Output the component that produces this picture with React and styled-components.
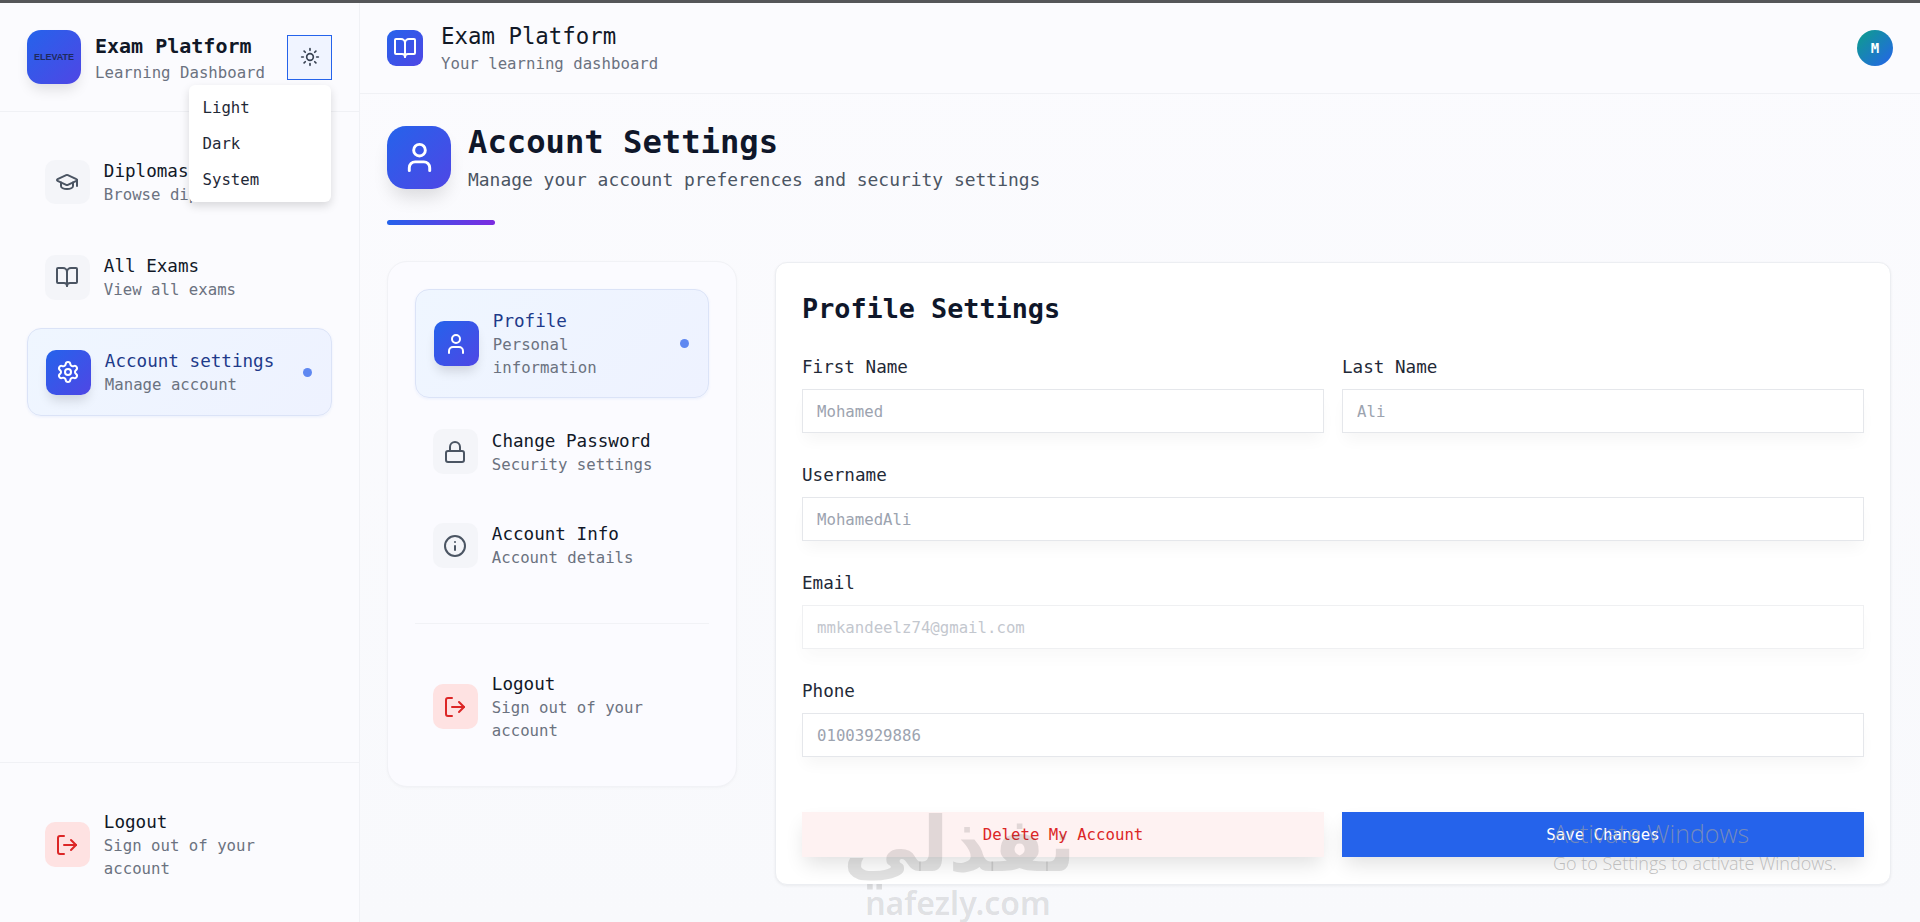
import React from 'react';
import styled, { createGlobalStyle } from 'styled-components';
import { BookOpen, GraduationCap, Info, Lock, LogOut, Settings, Sun, User } from 'lucide-react';

const GlobalStyle = createGlobalStyle`
  * { box-sizing: border-box; }
  html, body { margin: 0; padding: 0; height: 100%; }
  body {
    background: #fbfbfe;
    color: #111827;
    font-family: "DejaVu Sans Mono", "Liberation Mono", monospace;
    overflow: hidden;
  }
`;

const Page = styled.div`
  position: relative;
  width: 1920px;
  height: 922px;
  overflow: hidden;
  border-top: 3px solid #555659;
  display: flex;
`;

// Sidebar
const Sidebar = styled.aside`
  width: 360px;
  flex-shrink: 0;
  display: flex;
  flex-direction: column;
  background: #fbfbfe;
  border-right: 1px solid #f0f1f5;
`;

const SidebarHeader = styled.div`
  position: relative;
  height: 109px;
  flex-shrink: 0;
  padding: 0 27px;
  display: flex;
  align-items: center;
  gap: 14px;
  border-bottom: 1px solid #f0f1f5;
`;

const Logo = styled.div`
  width: 54px;
  height: 54px;
  flex-shrink: 0;
  border-radius: 14px;
  background: linear-gradient(135deg, #2563eb, #4f46e5);
  box-shadow: 0 8px 14px -3px rgba(0, 0, 0, 0.12);
  display: flex;
  align-items: center;
  justify-content: center;
  color: #1e2a5e;
  font-family: "Liberation Sans", sans-serif;
  font-size: 9px;
  font-weight: 700;
`;

const BrandText = styled.div`
  flex: 1;
  min-width: 0;
  padding-top: 4px;
`;

const BrandTitle = styled.div`
  font-size: 20px;
  line-height: 28px;
  font-weight: 600;
  color: #111827;
  white-space: nowrap;
`;

const BrandSub = styled.div`
  font-size: 15.7px;
  line-height: 26px;
  color: #6b7280;
  white-space: nowrap;
`;

const ThemeButton = styled.button`
  width: 45px;
  height: 45px;
  flex-shrink: 0;
  padding: 0;
  margin-left: -8px;
  background: #f0f4ff;
  border: 1px solid #2563eb;
  color: #374151;
  display: flex;
  align-items: center;
  justify-content: center;
`;

const ThemeMenu = styled.div`
  position: absolute;
  top: 82px;
  left: 189px;
  width: 142px;
  padding: 4px 0 5px;
  background: #fff;
  border-radius: 6px;
  box-shadow: 0 4px 10px rgba(0, 0, 0, 0.14);
  z-index: 5;
`;

const ThemeOption = styled.div`
  height: 36px;
  padding: 0 14px 0 13.5px;
  display: flex;
  align-items: center;
  font-size: 15.7px;
  color: #1f2937;
`;

const SideNav = styled.nav`
  padding: 26px 27px;
  display: flex;
  flex-direction: column;
  gap: 7.2px;
`;

const SidebarFooter = styled.div`
  margin-top: auto;
  padding: 27px 27px 23px;
  border-top: 1px solid #f0f1f5;
`;

// Shared nav row
const NavRow = styled.div`
  display: flex;
  align-items: center;
  gap: 14px;
  padding: 18px 18px 18px ${(p) => (p.$active ? '18px' : '17px')};
  min-height: 88px;
  margin-bottom: ${(p) => (p.$active ? '4px' : '0')};
  border-radius: 14px;
  border: 1px solid ${(p) => (p.$active ? '#dbe3f7' : 'transparent')};
  background: ${(p) => (p.$active ? 'linear-gradient(135deg, #eff6ff, #eef2ff)' : 'transparent')};
  box-shadow: ${(p) => (p.$active ? '0 1px 3px rgba(37, 99, 235, 0.08)' : 'none')};
`;

const iconBg = (p) => {
  if (p.$tone === 'active') return 'linear-gradient(135deg, #2563eb, #4f46e5)';
  if (p.$tone === 'danger') return '#fee2e2';
  return '#f4f5f9';
};

const iconColor = (p) => {
  if (p.$tone === 'active') return '#fff';
  if (p.$tone === 'danger') return '#dc2626';
  return '#4b5563';
};

const NavIcon = styled.div`
  width: 44.8px;
  height: 44.8px;
  flex-shrink: 0;
  border-radius: 10px;
  background: ${iconBg};
  color: ${iconColor};
  box-shadow: ${(p) => (p.$tone === 'active' ? '0 8px 12px -3px rgba(0, 0, 0, 0.14)' : 'none')};
  display: flex;
  align-items: center;
  justify-content: center;
`;

const NavText = styled.div`
  flex: 1;
  min-width: 0;
`;

const NavTitle = styled.div`
  font-size: 17.6px;
  line-height: 26px;
  font-weight: 500;
  color: ${(p) => (p.$active ? '#1e3a8a' : '#111827')};
`;

const NavSub = styled.div`
  font-size: 15.7px;
  line-height: 22.4px;
  color: #6b7280;
`;

const ActiveDot = styled.span`
  width: 9px;
  height: 9px;
  flex-shrink: 0;
  border-radius: 50%;
  background: #5f88f1;
  margin-right: 1px;
`;

// Main column
const Main = styled.main`
  flex: 1;
  min-width: 0;
  display: flex;
  flex-direction: column;
  background: linear-gradient(180deg, #fbfbfe, #f8f9fc);
`;

const TopBar = styled.header`
  height: 91px;
  flex-shrink: 0;
  padding: 0 27px;
  display: flex;
  align-items: center;
  gap: 18px;
  background: #fbfbfe;
  border-bottom: 1px solid #f0f1f5;
`;

const TopIcon = styled.div`
  width: 36px;
  height: 36px;
  border-radius: 9px;
  background: linear-gradient(135deg, #2563eb, #4f46e5);
  color: #fff;
  display: flex;
  align-items: center;
  justify-content: center;
`;

const TopText = styled.div`
  flex: 1;
  padding-top: 2px;
`;

const TopTitle = styled.div`
  font-size: 22.4px;
  line-height: 30px;
  font-weight: 500;
  color: #111827;
`;

const TopSub = styled.div`
  font-size: 15.7px;
  line-height: 26px;
  color: #6b7280;
`;

const Avatar = styled.div`
  width: 36px;
  height: 36px;
  border-radius: 50%;
  background: linear-gradient(135deg, #0d9f8a, #2563eb);
  color: #fff;
  font-size: 14px;
  font-weight: 700;
  display: flex;
  align-items: center;
  justify-content: center;
`;

const Content = styled.div`
  padding: 26px 29px 0 27px;
`;

const PageHead = styled.div`
  display: flex;
  align-items: center;
  gap: 17px;
`;

const PageIcon = styled.div`
  width: 64px;
  height: 63px;
  margin-top: 1px;
  flex-shrink: 0;
  border-radius: 19px;
  background: linear-gradient(135deg, #2563eb, #4f46e5);
  box-shadow: 0 12px 18px -4px rgba(0, 0, 0, 0.13);
  color: #fff;
  display: flex;
  align-items: center;
  justify-content: center;
`;

const PageTitle = styled.h1`
  margin: 0 0 3.8px;
  padding-top: 1px;
  font-size: 32.2px;
  line-height: 42px;
  font-weight: 700;
  color: #0f172a;
`;

const PageSub = styled.p`
  margin: 0;
  font-size: 17.95px;
  line-height: 26.4px;
  color: #4b5563;
`;

const AccentBar = styled.div`
  width: 108px;
  height: 5px;
  margin-top: 27px;
  border-radius: 3px;
  background: linear-gradient(90deg, #2563eb, #7c2be0);
`;

const SettingsGrid = styled.div`
  margin-top: 36px;
  display: grid;
  grid-template-columns: 350px 1116px;
  column-gap: 38px;
  align-items: start;
`;

const SettingsNav = styled.div`
  padding: 27px 27px 24.5px;
  border: 1px solid #f1f2f6;
  border-radius: 20px;
  background: #fbfbff;
  box-shadow: 0 1px 3px rgba(0, 0, 0, 0.03);
  display: flex;
  flex-direction: column;
  gap: 5.8px;
`;

const NavDivider = styled.div`
  height: 1px;
  margin: 28px 0 22px;
  background: #f1f2f6;
`;

const FormCard = styled.section`
  margin-top: 1px;
  padding: 26px 26px 27px;
  background: #fff;
  border: 1px solid #eceef2;
  border-radius: 12px;
  box-shadow: 0 1px 3px rgba(0, 0, 0, 0.06);
`;

const FormTitle = styled.h2`
  margin: 0 0 25px;
  font-size: 26.8px;
  line-height: 40px;
  font-weight: 600;
  color: #0f172a;
`;

const FieldRow = styled.div`
  display: grid;
  grid-template-columns: 1fr 1fr;
  column-gap: 18px;
`;

const Field = styled.label`
  display: block;
  margin-bottom: 29px;
`;

const FieldLabel = styled.span`
  display: block;
  margin-bottom: 9px;
  font-size: 17.6px;
  line-height: 26px;
  color: #1f2937;
`;

const TextInput = styled.input`
  display: block;
  width: 100%;
  height: 44px;
  padding: 0 14px;
  background: #fff;
  border: 1px solid #e5e7eb;
  border-radius: 0;
  outline: none;
  font-family: inherit;
  font-size: 15.7px;
  box-shadow: 0 10px 15px -3px rgba(0, 0, 0, 0.04);
  opacity: ${(p) => (p.disabled ? 0.6 : 1)};

  &::placeholder {
    color: #9ca3af;
    opacity: 1;
  }
`;

const ActionRow = styled.div`
  margin-top: 55px;
  display: grid;
  grid-template-columns: 1fr 1fr;
  column-gap: 18px;
`;

const ActionButton = styled.button`
  height: 45px;
  border: none;
  font-family: inherit;
  font-size: 15.7px;
  font-weight: 500;
  background: ${(p) => (p.$danger ? '#fef2f2' : '#2563eb')};
  color: ${(p) => (p.$danger ? '#dc2626' : '#fff')};
  box-shadow: 0 10px 20px -3px rgba(0, 0, 0, 0.12);
`;

// Overlays baked into the screenshot
const Watermark = styled.div`
  position: absolute;
  left: 843px;
  top: 800px;
  width: 230px;
  text-align: center;
  color: rgba(60, 60, 60, 0.15);
  pointer-events: none;
  z-index: 8;
`;

const WatermarkArabic = styled.div`
  font-family: "DejaVu Sans", sans-serif;
  font-size: 76px;
  line-height: 84px;
  font-weight: 700;
`;

const WatermarkLatin = styled.div`
  font-family: "Noto Sans", sans-serif;
  font-size: 32px;
  line-height: 32px;
  font-weight: 600;
`;

const ActivateNotice = styled.div`
  position: absolute;
  left: 1553px;
  top: 814px;
  color: rgba(160, 160, 160, 0.65);
  font-family: "Open Sans", sans-serif;
  font-weight: 300;
  pointer-events: none;
  z-index: 8;
`;

const ActivateTitle = styled.div`
  font-size: 25px;
  line-height: 33px;
`;

const ActivateSub = styled.div`
  font-size: 18px;
  line-height: 27px;
`;

const NavItem = ({ icon: Icon, title, sub, active, danger }) => (
  <NavRow $active={active}>
    <NavIcon $tone={active ? 'active' : danger ? 'danger' : 'plain'}>
      <Icon size={24} strokeWidth={2} />
    </NavIcon>
    <NavText>
      <NavTitle $active={active}>{title}</NavTitle>
      <NavSub>{sub}</NavSub>
    </NavText>
    {active && <ActiveDot />}
  </NavRow>
);

const App = () => (
  <Page>
    <GlobalStyle />
    <Sidebar>
      <SidebarHeader>
        <Logo>ELEVATE</Logo>
        <BrandText>
          <BrandTitle>Exam Platform</BrandTitle>
          <BrandSub>Learning Dashboard</BrandSub>
        </BrandText>
        <ThemeButton aria-label="Theme">
          <Sun size={20} />
        </ThemeButton>
        <ThemeMenu>
          <ThemeOption>Light</ThemeOption>
          <ThemeOption>Dark</ThemeOption>
          <ThemeOption>System</ThemeOption>
        </ThemeMenu>
      </SidebarHeader>
      <SideNav>
        <NavItem icon={GraduationCap} title="Diplomas" sub="Browse diplomas" />
        <NavItem icon={BookOpen} title="All Exams" sub="View all exams" />
        <NavItem icon={Settings} title="Account settings" sub="Manage account" active />
      </SideNav>
      <SidebarFooter>
        <NavItem icon={LogOut} title="Logout" sub="Sign out of your account" danger />
      </SidebarFooter>
    </Sidebar>

    <Main>
      <TopBar>
        <TopIcon>
          <BookOpen size={24} />
        </TopIcon>
        <TopText>
          <TopTitle>Exam Platform</TopTitle>
          <TopSub>Your learning dashboard</TopSub>
        </TopText>
        <Avatar>M</Avatar>
      </TopBar>

      <Content>
        <PageHead>
          <PageIcon>
            <User size={35} />
          </PageIcon>
          <div>
            <PageTitle>Account Settings</PageTitle>
            <PageSub>Manage your account preferences and security settings</PageSub>
          </div>
        </PageHead>
        <AccentBar />

        <SettingsGrid>
          <SettingsNav>
            <NavItem icon={User} title="Profile" sub="Personal information" active />
            <NavItem icon={Lock} title="Change Password" sub="Security settings" />
            <NavItem icon={Info} title="Account Info" sub="Account details" />
            <NavDivider />
            <NavItem icon={LogOut} title="Logout" sub="Sign out of your account" danger />
          </SettingsNav>

          <FormCard>
            <FormTitle>Profile Settings</FormTitle>
            <FieldRow>
              <Field>
                <FieldLabel>First Name</FieldLabel>
                <TextInput placeholder="Mohamed" />
              </Field>
              <Field>
                <FieldLabel>Last Name</FieldLabel>
                <TextInput placeholder="Ali" />
              </Field>
            </FieldRow>
            <Field>
              <FieldLabel>Username</FieldLabel>
              <TextInput placeholder="MohamedAli" />
            </Field>
            <Field>
              <FieldLabel>Email</FieldLabel>
              <TextInput placeholder="mmkandeelz74@gmail.com" disabled />
            </Field>
            <Field>
              <FieldLabel>Phone</FieldLabel>
              <TextInput placeholder="01003929886" />
            </Field>
            <ActionRow>
              <ActionButton $danger>Delete My Account</ActionButton>
              <ActionButton>Save Changes</ActionButton>
            </ActionRow>
          </FormCard>
        </SettingsGrid>
      </Content>
    </Main>

    <Watermark>
      <WatermarkArabic>نفذلي</WatermarkArabic>
      <WatermarkLatin>nafezly.com</WatermarkLatin>
    </Watermark>
    <ActivateNotice>
      <ActivateTitle>Activate Windows</ActivateTitle>
      <ActivateSub>Go to Settings to activate Windows.</ActivateSub>
    </ActivateNotice>
  </Page>
);

export default App;
